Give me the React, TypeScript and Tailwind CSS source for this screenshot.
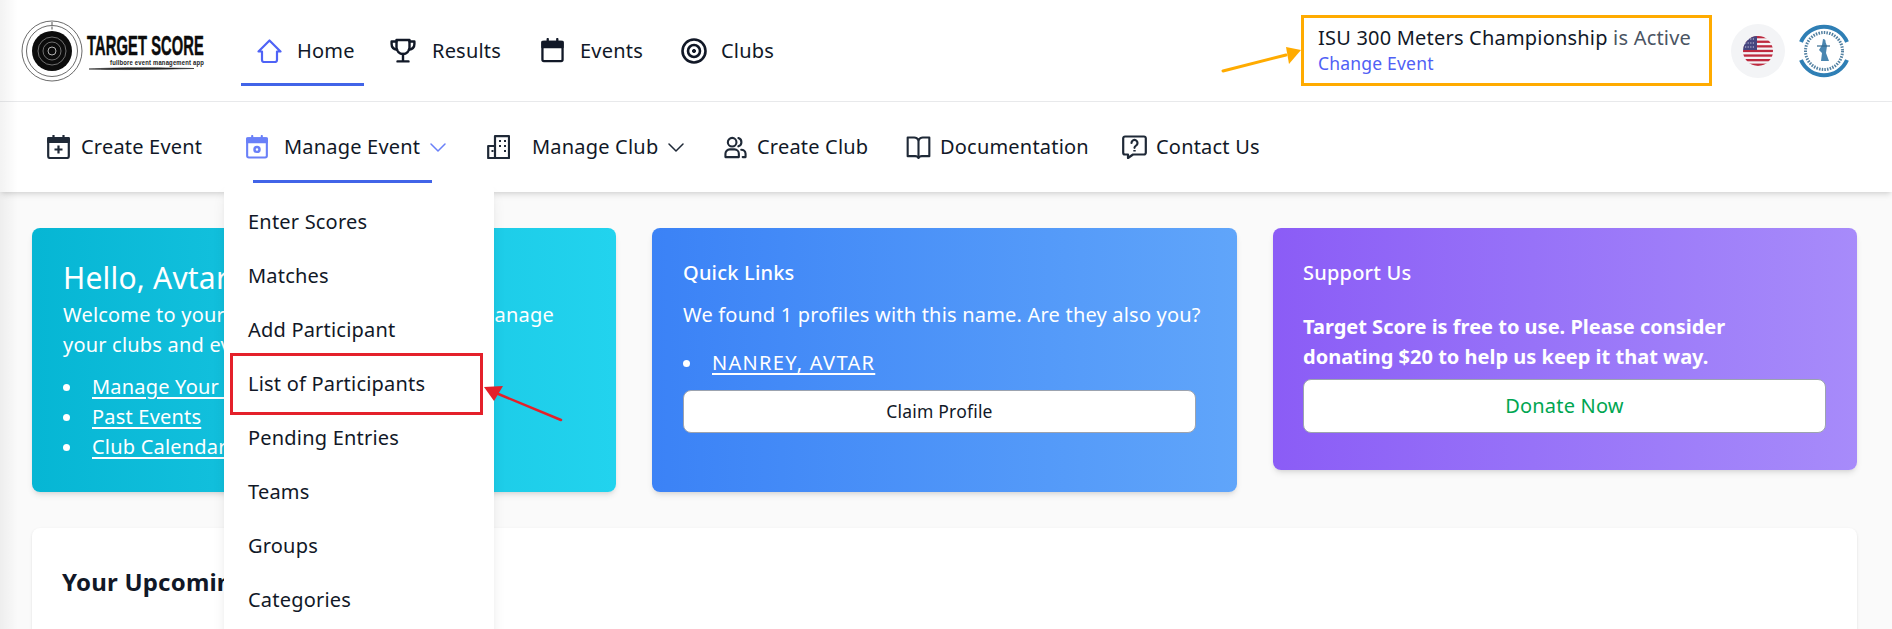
import React from 'react';

const FONT = "font-['Noto_Sans','Lato',sans-serif]";

// icons, drawn on a 24 unit grid
function HomeIcon() {
  return (
    <svg viewBox="0 0 25 24" className="w-[25px] h-[24px] shrink-0" fill="none" stroke="#4f63f6" strokeWidth="2.2" strokeLinejoin="round" strokeLinecap="round">
      <path d="M1.500 12.500 12.500 1.500l11 11h-3.500V21a2 2 0 0 1-2 2H7a2 2 0 0 1-2-2v-8.500H1.500z" />
    </svg>
  );
}

function TrophyIcon() {
  return (
    <svg viewBox="0 0 26 25" className="w-[26px] h-[25px] shrink-0" fill="none" stroke="#111827" strokeWidth="2.4" strokeLinejoin="round" strokeLinecap="round">
      <path d="M6.500 2h13v7.500a6.500 6.500 0 0 1-13 0V2z" />
      <path d="M6.500 3.500H1.600v2.400c0 3 2.200 5.300 5.600 5.800M19.500 3.500h4.900v2.400c0 3-2.200 5.300-5.600 5.800" />
      <path d="M13 16v7M7.500 23.400h11" />
    </svg>
  );
}

function CalendarIcon() {
  return (
    <svg viewBox="0 0 24 25" className="w-[23px] h-[25px] shrink-0" fill="none" stroke="#111827" strokeWidth="2.4" strokeLinejoin="round">
      <rect x="1.500" y="3.500" width="21" height="20" rx="1.500" />
      <path d="M1.500 3.500h21v5.500h-21z" fill="#111827" />
      <path d="M7 .5v4M17 .5v4" strokeLinecap="round" />
    </svg>
  );
}

function TargetIcon() {
  return (
    <svg viewBox="0 0 26 26" className="w-[26px] h-[26px] shrink-0" fill="none" stroke="#111827" strokeWidth="2.6">
      <circle cx="13" cy="13" r="11.500" />
      <circle cx="13" cy="13" r="6" />
      <circle cx="13" cy="13" r="1.600" fill="#111827" strokeWidth="1" />
    </svg>
  );
}

function CalendarPlusIcon() {
  return (
    <svg viewBox="0 0 23 24" className="w-[23px] h-[24px] shrink-0" fill="none" stroke="#1f2937" strokeWidth="2.2" strokeLinejoin="round">
      <rect x="1.200" y="3" width="20.600" height="20" rx="1.800" />
      <path d="M1.200 3h20.600v4H1.200z" fill="#1f2937" />
      <path d="M6.500.5v3.500M16.500.5v3.500" strokeLinecap="round" />
      <path d="M11.500 10.500v8M7.500 14.500h8" />
    </svg>
  );
}

function CalendarGearIcon() {
  return (
    <svg viewBox="0 0 23 24" className="w-[22px] h-[24px] shrink-0" fill="none" stroke="#6a80f8" strokeWidth="2.2" strokeLinejoin="round">
      <rect x="1.200" y="3" width="20.600" height="20" rx="1.800" />
      <path d="M1.200 3h20.600v4H1.200z" fill="#6a80f8" />
      <path d="M6.500.5v3.500M16.500.5v3.500" strokeLinecap="round" />
      <circle cx="11.500" cy="14.500" r="2.600" strokeWidth="2.600" />
    </svg>
  );
}

function BuildingIcon() {
  return (
    <svg viewBox="0 0 23 24" className="w-[23px] h-[24px] shrink-0" fill="none" stroke="#1f2937" strokeWidth="2.2" strokeLinejoin="round">
      <path d="M8 11V1.200h14V23H1.200V11H8v12" />
      <path d="M12 6h2M17 6h2M12 11h2M17 11h2M17 16h2M4.500 16h2" strokeWidth="2" />
    </svg>
  );
}

function PeopleIcon() {
  return (
    <svg viewBox="0 0 24 24" className="w-[23px] h-[23px] shrink-0" fill="none" stroke="#1f2937" strokeWidth="2.2" strokeLinejoin="round" strokeLinecap="round">
      <circle cx="8.500" cy="6.500" r="4.500" />
      <path d="M1.500 22v-3.500a4.500 4.500 0 0 1 4.500-4.500h5a4.500 4.500 0 0 1 4.500 4.500V22z" />
      <path d="M15 2.200a4.500 4.500 0 0 1 0 8.600M18 14.300a4.500 4.500 0 0 1 4.500 4.200V22h-3" />
    </svg>
  );
}

function BookIcon() {
  return (
    <svg viewBox="0 0 25 24" className="w-[25px] h-[23px] shrink-0" fill="none" stroke="#1f2937" strokeWidth="2.2" strokeLinejoin="round">
      <path d="M12.500 4.500C11.500 2.500 10 1.500 8 1.500H1.200v19.500H9c1.800 0 3 .6 3.500 2 .5-1.400 1.700-2 3.500-2h7.800V1.500H17c-2 0-3.500 1-4.500 3z" />
      <path d="M12.500 4.500V22" />
    </svg>
  );
}

function HelpBubbleIcon() {
  return (
    <svg viewBox="0 0 25 24" className="w-[25px] h-[24px] shrink-0" fill="none" stroke="#1f2937" strokeWidth="2.2" strokeLinejoin="round">
      <path d="M3 1.500h19a1.800 1.800 0 0 1 1.800 1.800v14.400a1.800 1.800 0 0 1-1.800 1.800H11l-5 3.500v-3.500H3a1.800 1.800 0 0 1-1.800-1.800V3.300A1.800 1.800 0 0 1 3 1.500z" />
      <path d="M9.500 8a3 3 0 1 1 4.500 2.600c-1 .6-1.500 1.100-1.500 2.200" strokeLinecap="round" />
      <path d="M12.500 15v1.500" strokeWidth="2.400" />
    </svg>
  );
}

function Chevron({ color }: { color: string }) {
  return (
    <svg viewBox="0 0 16 9" className="w-[16px] h-[9px] shrink-0" fill="none" stroke={color} strokeWidth="1.5" strokeLinecap="round" strokeLinejoin="round">
      <path d="M1 1l7 7 7-7" />
    </svg>
  );
}

function Logo() {
  return (
    <svg viewBox="0 0 190 62" className="w-[190px] h-[62px] shrink-0">
      <circle cx="31" cy="31" r="30" fill="none" stroke="#444" strokeWidth="0.8" />
      <circle cx="31" cy="31" r="25.500" fill="none" stroke="#444" strokeWidth="0.8" />
      <circle cx="31" cy="31" r="20" fill="#0c0c0c" />
      <circle cx="31" cy="31" r="14" fill="none" stroke="#999" strokeWidth="0.7" />
      <circle cx="31" cy="31" r="9" fill="none" stroke="#999" strokeWidth="0.7" />
      <circle cx="31" cy="31" r="4" fill="none" stroke="#ddd" strokeWidth="0.8" />
      <path d="M31 2v3M31 6.500v3" stroke="#555" strokeWidth="1" />
      <text x="66" y="35" textLength="117" lengthAdjust="spacingAndGlyphs" fontFamily="Liberation Sans" fontWeight="700" fontSize="28" fill="#0c0c0c" stroke="#0c0c0c" strokeWidth="0.5">TARGET SCORE</text>
      <text x="89" y="45" textLength="94" lengthAdjust="spacingAndGlyphs" fontFamily="Liberation Sans" fontWeight="700" fontSize="6.500" fill="#222">fullbore event management app</text>
      <path d="M68 49c30-1.500 60-1.500 105-.5-40 1-75 1.500-105 .5z" fill="#222" stroke="#222" strokeWidth="0.6" />
    </svg>
  );
}

function FlagIcon() {
  const stripes = [0, 1, 2, 3, 4, 5, 6];
  return (
    <svg viewBox="0 0 30 30" className="w-[30px] h-[30px]">
      <clipPath id="flag-clip">
        <circle cx="15" cy="15" r="15" />
      </clipPath>
      <g clipPath="url(#flag-clip)">
        <rect width="30" height="30" fill="#f4f4f6" />
        {stripes.map((i) => (
          <rect key={i} y={i * 4.6} width="30" height="2.300" fill="#bd2a3f" />
        ))}
        <rect width="14" height="14" fill="#46467f" />
        <path d="M2 3h10M2 7h10M2 11h10" stroke="#cfcfe4" strokeWidth="1.200" strokeDasharray="1.200 1.400" />
      </g>
    </svg>
  );
}

function Emblem() {
  return (
    <svg viewBox="0 0 50 54" className="w-[50px] h-[54px] shrink-0">
      <path d="M2 18A25 25 0 0 1 48 18" fill="none" stroke="#2f7fb5" strokeWidth="4" />
      <path d="M2 36A25 25 0 0 0 48 36" fill="none" stroke="#2f7fb5" strokeWidth="4" />
      <circle cx="25" cy="27" r="18.500" fill="none" stroke="#33688f" strokeWidth="3" strokeDasharray="1.500 1.200" opacity="0.85" />
      <path d="M24 15c2 0 3 1.500 2.500 3l1.500 4-1 7 3 8h-8l1-8-3-3 3-5z" fill="#4a86b0" />
      <path d="M18 22h13" stroke="#33688f" strokeWidth="1.200" />
    </svg>
  );
}

const dropdownItems = ['Enter Scores', 'Matches', 'Add Participant', 'List of Participants', 'Pending Entries', 'Teams', 'Groups', 'Categories'];

function Bullet({ label, wide }: { label: string; wide?: boolean }) {
  return (
    <li className="flex items-center">
      <span className="w-[7px] h-[7px] rounded-full bg-white mr-[22px]" />
      <a className={`underline underline-offset-[3px] ${wide ? 'tracking-[1.3px]' : ''}`}>{label}</a>
    </li>
  );
}

function App() {
  return (
    <div className={`relative h-[629px] overflow-hidden bg-[#fafafa] text-[20px] tracking-[0.2px] text-[#111827] ${FONT}`}>
      {/* 상단 헤더 */}
      <header className="flex items-center h-[102px] bg-white border-b border-[#e9eaec] pl-[21px]">
        <Logo />
        <nav className="flex items-center h-full ml-[30px] whitespace-nowrap">
          <a className="relative flex items-center h-full pl-[16px] w-[123px] gap-[15px]">
            <HomeIcon />
            <span>Home</span>
            <span className="absolute left-0 right-0 top-[83px] h-[3px] bg-[#4164e8]" />
          </a>
          <a className="flex items-center ml-[26px] w-[111px] gap-[16px]">
            <TrophyIcon />
            <span>Results</span>
          </a>
          <a className="flex items-center ml-[40px] w-[101px] gap-[16px]">
            <CalendarIcon />
            <span>Events</span>
          </a>
          <a className="flex items-center ml-[39px] gap-[14px]">
            <TargetIcon />
            <span>Clubs</span>
          </a>
        </nav>
        <div className="ml-auto flex items-center pr-[43px]">
          <div className="w-[411px] h-[71px] border-[3px] border-[#ffab00] pl-[14px] pt-[5px] whitespace-nowrap">
            <p className="leading-[30px]">
              ISU 300 Meters Championship <span className="text-[#4b5563]">is Active</span>
            </p>
            <a className="block text-[17.5px] leading-[20px] text-[#5060f5]">Change Event</a>
          </div>
          <div className="ml-[19px] w-[54px] h-[54px] rounded-full bg-[#f3f4f6] flex items-center justify-center">
            <FlagIcon />
          </div>
          <div className="ml-[14px]">
            <Emblem />
          </div>
        </div>
      </header>

      {/* 두번째 메뉴 */}
      <div className="relative z-10 flex items-center h-[90px] bg-white shadow-md pl-[47px] whitespace-nowrap">
        <a className="flex items-center w-[156px] gap-[11px]">
          <CalendarPlusIcon />
          <span>Create Event</span>
        </a>
        <div className="relative flex items-center h-full ml-[43px] w-[200px]">
          <CalendarGearIcon />
          <span className="ml-[16px] w-[146px]">Manage Event</span>
          <Chevron color="#6a80f8" />
          <span className="absolute left-[7px] w-[179px] top-[78px] h-[3px] bg-[#4164e8]" />
          {/* 드롭다운 */}
          <div className="absolute left-[-22px] top-[81px] w-[270px] bg-white rounded-t-lg shadow-lg pt-[12px] pb-4">
            {dropdownItems.map((item) => (
              <div key={item} className="relative flex items-center h-[54px] pl-[24px]">
                {item}
                {item === 'List of Participants' && (
                  <span className="absolute left-[6px] right-[11px] top-[-4px] bottom-[-4px] border-[3px] border-[#e4202a]" />
                )}
              </div>
            ))}
          </div>
        </div>
        <a className="flex items-center ml-[41px] w-[197px]">
          <BuildingIcon />
          <span className="ml-[22px] w-[136px]">Manage Club</span>
          <Chevron color="#1f2937" />
        </a>
        <a className="flex items-center ml-[40px] w-[147px] gap-[10px]">
          <PeopleIcon />
          <span>Create Club</span>
        </a>
        <a className="flex items-center ml-[35px] w-[180px] gap-[9px]">
          <BookIcon />
          <span>Documentation</span>
        </a>
        <a className="flex items-center ml-[36px] gap-[9px]">
          <HelpBubbleIcon />
          <span>Contact Us</span>
        </a>
      </div>

      <main className="pl-[32px] pr-[35px] pt-[36px]">
        <div className="grid grid-cols-[584px_585px_584px] gap-[36px] items-start text-white">
          <section className="rounded-lg shadow-md bg-linear-to-r from-[#06b6d4] to-[#22d3ee] pl-[31px] pr-[30px] pt-[32px] pb-[30px]">
            <h2 className="text-[30px] leading-[36px] mb-[4px]">Hello, Avtar</h2>
            <p className="leading-[30px] whitespace-nowrap">Welcome to your dashboard. Here you can manage<br />your clubs and events.</p>
            <ul className="mt-[12px] leading-[30px]">
              <Bullet label="Manage Your Clubs" />
              <Bullet label="Past Events" />
              <Bullet label="Club Calendar" />
            </ul>
          </section>

          <section className="rounded-lg shadow-md bg-linear-to-r from-[#3b82f6] to-[#60a5fa] pl-[31px] pr-[41px] pt-[31px] pb-[59px]">
            <h2 className="leading-[28px] font-medium">Quick Links</h2>
            <p className="mt-[13px] leading-[30px] whitespace-nowrap">We found 1 profiles with this name. Are they also you?</p>
            <ul className="mt-[18px] leading-[30px]">
              <Bullet label="NANREY, AVTAR" wide />
            </ul>
            <button className="mt-[12px] w-full h-[43px] rounded-lg bg-white border border-[#9ca3af] text-[17.5px] text-[#111827]">Claim Profile</button>
          </section>

          <section className="rounded-lg shadow-md bg-linear-to-r from-[#8b5cf6] to-[#a78bfa] pl-[30px] pr-[31px] pt-[31px] pb-[37px]">
            <h2 className="leading-[28px] font-medium">Support Us</h2>
            <p className="mt-[25px] leading-[30px] font-bold whitespace-nowrap tracking-normal">Target Score is free to use. Please consider<br />donating $20 to help us keep it that way.</p>
            <button className="mt-[7px] w-full h-[54px] rounded-lg bg-white border border-[#9ca3af] text-[#00a651]">Donate Now</button>
          </section>
        </div>

        <section className="mt-[36px] h-[200px] rounded-lg bg-white shadow-sm pl-[30px] pt-[38px]">
          <h2 className="text-[24px] leading-[32px] font-bold">Your Upcoming Events</h2>
        </section>
      </main>

      {/* 주석 화살표 */}
      <svg className="absolute left-[1220px] top-[46px] z-20 pointer-events-none" width="84" height="28" viewBox="0 0 84 28">
        <path d="M3 25 66 9" stroke="#ffab00" strokeWidth="3" strokeLinecap="round" />
        <path d="M81 4 66 1l3 17z" fill="#ffab00" />
      </svg>
      <svg className="absolute left-[482px] top-[384px] z-20 pointer-events-none" width="82" height="40" viewBox="0 0 82 40">
        <path d="M79 36 14 9" stroke="#e4202a" strokeWidth="2.500" strokeLinecap="round" />
        <path d="M2 3 21 2 12 17z" fill="#e4202a" />
      </svg>

      {/* 왼쪽 가장자리 그림자 */}
      <div className="absolute inset-y-0 left-0 w-[18px] z-30 pointer-events-none bg-linear-to-r from-black/5 to-transparent" />
    </div>
  );
}

export default App;
